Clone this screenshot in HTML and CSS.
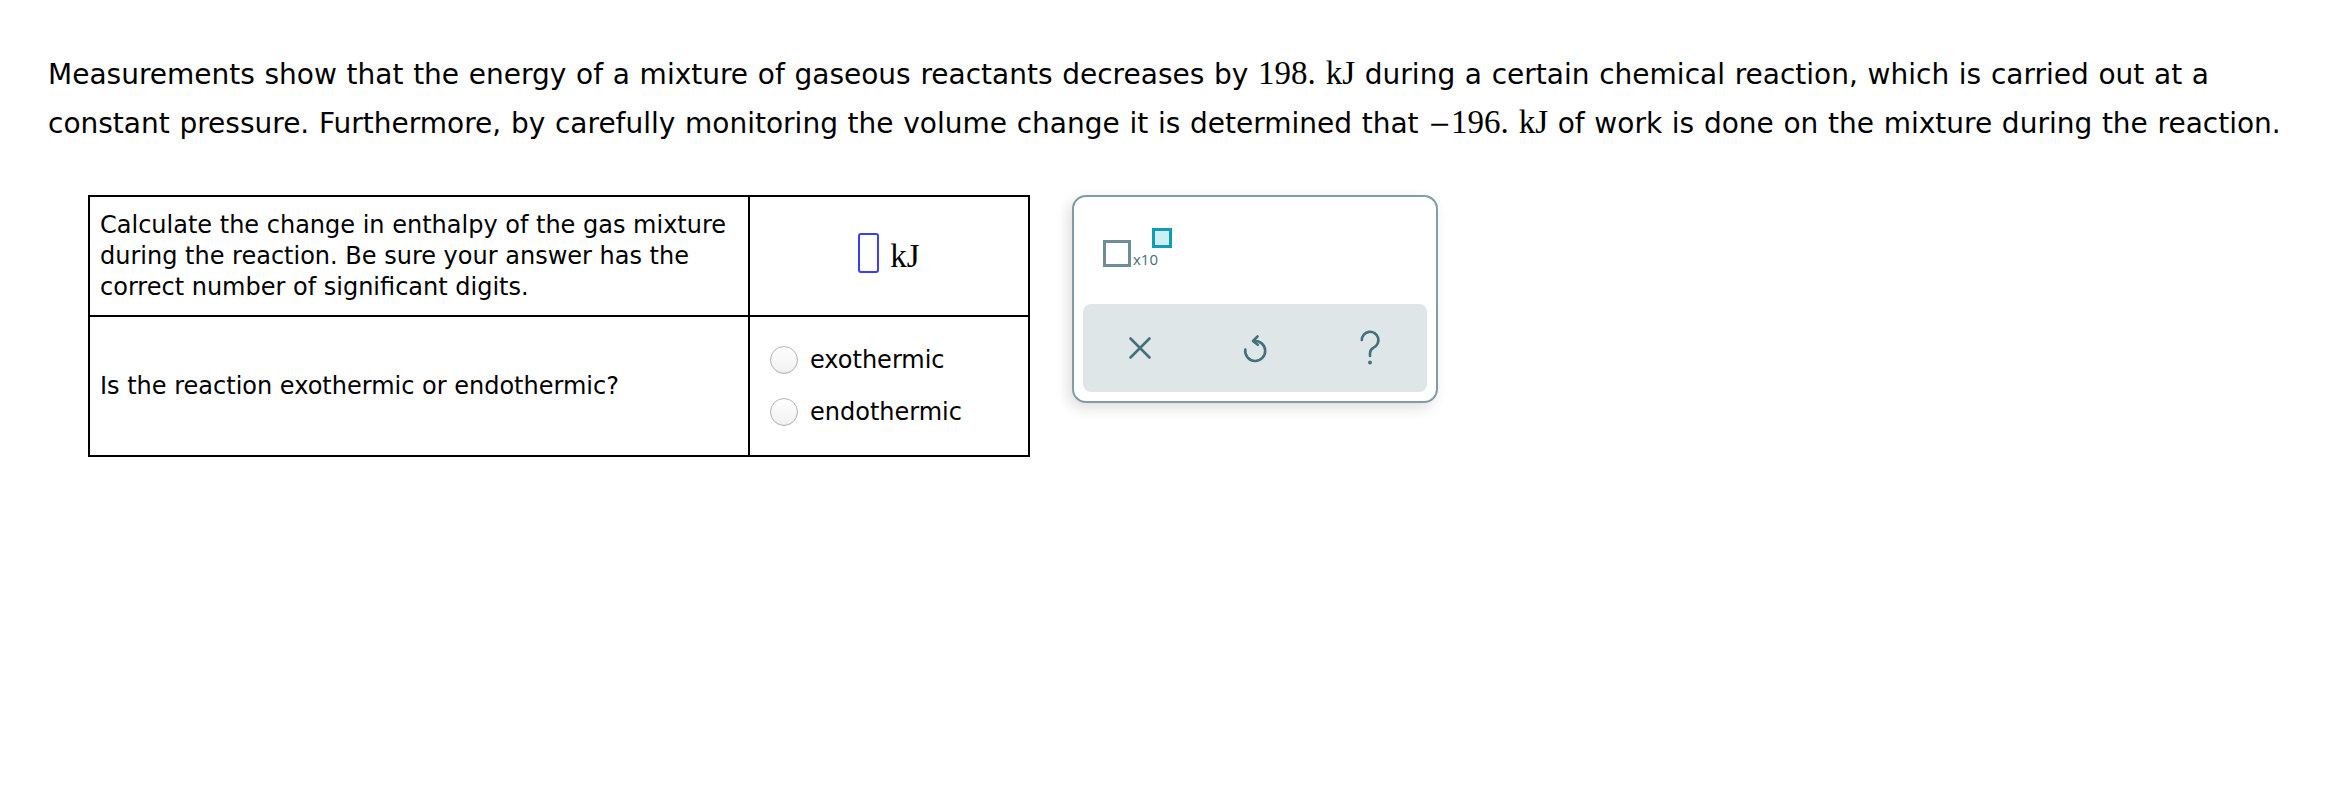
FILE: index.html
```html
<!DOCTYPE html>
<html lang="en">
<head>
<meta charset="utf-8">
<title>Enthalpy question</title>
<link rel="stylesheet" href="styles.css">
</head>
<body>
<div class="page">
  <p class="prompt">Measurements show that the energy of a mixture of gaseous reactants decreases by <span class="math">198.<span class="unit">kJ</span></span> during a certain chemical reaction, which is carried out at a<br>constant pressure. Furthermore, by carefully monitoring the volume change it is determined that <span class="math"><span class="minus">−</span>196.<span class="unit">kJ</span></span> of work is done on the mixture during the reaction.</p>

  <div class="work">
    <div class="qtable">
      <div class="cell q">Calculate the change in enthalpy of the gas mixture during the reaction. Be sure your answer has the correct number of significant digits.</div>
      <div class="cell a center">
        <span class="ansbox"></span><span class="math kj">kJ</span>
      </div>
      <div class="cell q">Is the reaction exothermic or endothermic?</div>
      <div class="cell a">
        <ul class="choices">
          <li><span class="radio"></span>exothermic</li>
          <li><span class="radio"></span>endothermic</li>
        </ul>
      </div>
    </div>

    <div class="panel">
      <div class="tools">
        <div class="sci">
          <span class="base"></span><span class="x10">x10</span><span class="expo"></span>
        </div>
      </div>
      <div class="bar">
        <div class="btn">
          <svg width="24" height="24" viewBox="0 0 24 24"><path d="M2.5 2.5 L21.5 21.5 M21.5 2.5 L2.5 21.5" class="ic"/></svg>
        </div>
        <div class="btn">
          <svg width="26" height="32" viewBox="0 0 26 32"><path d="M11.5 9.1 A10 10 0 1 1 3.3 17.5" class="ic"/><path d="M15.5 4.5 L11 9 L15.8 12.8" class="ic"/></svg>
        </div>
        <div class="btn">
          <svg width="24" height="36" viewBox="0 0 24 36"><path d="M3.8 10 A8.3 8.3 0 1 1 15.6 17.6 C13.2 18.9 12 20.6 12 23.2 V26" class="ic"/><circle cx="12" cy="32.5" r="1.9" class="dot"/></svg>
        </div>
      </div>
    </div>
  </div>
</div>
</body>
</html>
```

FILE: styles.css
```css
html, body {
  margin: 0;
  padding: 0;
  background: #ffffff;
}

body {
  font-family: "DejaVu Sans", Verdana, sans-serif;
  color: #000000;
}

.page {
  padding: 50px 0 0 48px;
}

.prompt {
  margin: 0;
  font-size: 28px;
  line-height: 49px;
  word-spacing: 0.8px;
  white-space: nowrap;
}

.math {
  font-family: "Liberation Serif", "Times New Roman", serif;
  font-size: 33px;
  line-height: 1;
  word-spacing: 0;
}

.math .unit {
  margin-left: 10px;
}

.minus {
  font-family: "DejaVu Serif", "Liberation Serif", serif;
  font-size: 27px;
  margin-right: 0;
}

.work {
  display: flex;
  align-items: flex-start;
  gap: 42px;
  margin-top: 47px;
  margin-left: 40px;
}

/* question table */
.qtable {
  display: grid;
  grid-template-columns: 660px 280px;
  grid-template-rows: 120px 140px;
  border-left: 2px solid #000;
  border-top: 2px solid #000;
}

.cell {
  box-sizing: border-box;
  border-right: 2px solid #000;
  border-bottom: 2px solid #000;
  display: flex;
  align-items: center;
}

.cell.q {
  padding: 0 12px 0 10px;
  font-size: 24px;
  line-height: 31px;
}

.cell.center {
  justify-content: center;
}

.ansbox {
  box-sizing: border-box;
  width: 21px;
  height: 40px;
  border: 2px solid #3d3df2;
  border-radius: 3px;
  margin-right: 11px;
  margin-top: -6px;
}

.kj {
  font-size: 33px;
}

.choices {
  list-style: none;
  margin: 0;
  padding: 0 0 0 20px;
  display: flex;
  flex-direction: column;
  gap: 12px;
  font-size: 24px;
}

.choices li {
  display: flex;
  align-items: center;
  height: 40px;
}

.radio {
  box-sizing: border-box;
  width: 28px;
  height: 28px;
  border-radius: 50%;
  border: 1.5px solid #b4b4b4;
  background: linear-gradient(#ffffff, #f1f1f1);
  box-shadow: inset 0 -1px 1px rgba(0, 0, 0, 0.06);
  margin-right: 12px;
}

/* tool panel */
.panel {
  box-sizing: border-box;
  width: 366px;
  height: 208px;
  border: 2px solid #819ca4;
  border-radius: 14px;
  background: #ffffff;
  padding: 9px;
  box-shadow: -4px 5px 14px rgba(0, 0, 0, 0.13);
  display: flex;
  flex-direction: column;
}

.tools {
  height: 98px;
  padding: 22px 0 0 20px;
  box-sizing: border-box;
}

.sci {
  display: flex;
  align-items: flex-start;
}

.base {
  box-sizing: border-box;
  width: 28px;
  height: 27px;
  border: 3px solid #6f8d95;
  margin-top: 12px;
}

.x10 {
  font-family: "Open Sans", "DejaVu Sans", sans-serif;
  font-size: 15px;
  line-height: 16px;
  color: #4a6e79;
  margin-top: 23px;
  margin-left: 2px;
}

.expo {
  box-sizing: border-box;
  width: 20px;
  height: 20px;
  border: 3px solid #0f9db5;
  background: #cdeff3;
  margin-left: -6px;
}

.bar {
  flex: 1;
  background: #dfe6e8;
  border-radius: 8px;
  display: flex;
}

.btn {
  flex: 1;
  display: flex;
  align-items: center;
  justify-content: center;
}

.ic {
  fill: none;
  stroke: #43707d;
  stroke-width: 2.6;
  stroke-linecap: round;
  stroke-linejoin: round;
}

.dot {
  fill: #43707d;
}
```
